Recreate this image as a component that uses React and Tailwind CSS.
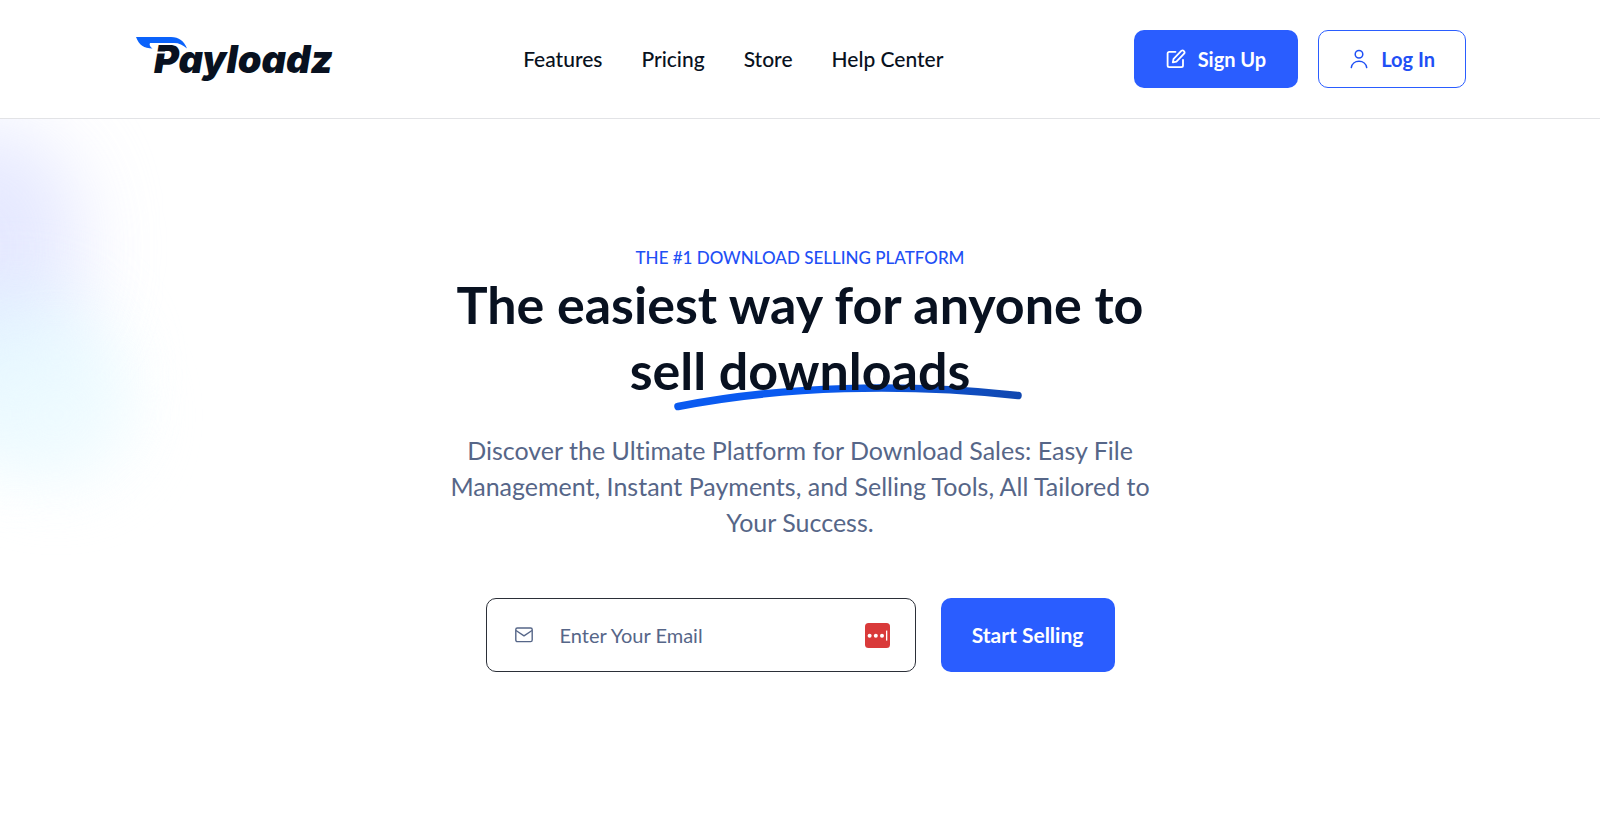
import React, { useState } from 'react';

const navLinks = [
  { name: 'Features', href: '#features' },
  { name: 'Pricing', href: '#pricing' },
  { name: 'Store', href: '#store' },
  { name: 'Help Center', href: '#help' },
];

const Logo = () => (
  <a href="#home" className="relative block pl-5 text-[#081120]">
    <span className="block font-[Inter] text-[38px] leading-[52px] font-black italic">Payloadz</span>
    <svg className="absolute left-0.5 top-1 h-8 w-14" viewBox="0 0 56 32" fill="none">
      <path d="M18 15.5H30" stroke="#fff" strokeWidth="2" />
      <path fill="#0a62fb" d="M0 0H35C43 0 48 4 51 11.5C47 8 43 6 38 6H14C13 7.5 14 10 16.5 11.5C8 11.5 3 8 0 0Z" />
    </svg>
  </a>
);

const Navbar = () => (
  <header className="relative z-10 border-b border-[#e2e3e6] bg-white px-6">
    <div className="mx-auto flex h-[118px] max-w-[1332px] items-center justify-between">
      <Logo />
      <nav className="flex items-center gap-[39px] text-[21px] font-medium text-[#081120]">
        {navLinks.map((item) => (
          <a key={item.name} href={item.href} className="hover:text-[#2a5dff]">
            {item.name}
          </a>
        ))}
      </nav>
      <div className="flex items-center gap-5 text-xl">
        <button type="button" className="flex h-[58px] items-center gap-3 rounded-[10px] bg-[#2a5dff] px-8 font-bold text-white">
          <svg className="h-5 w-5" viewBox="0 0 20 20" fill="none" stroke="currentColor" strokeWidth="1.8" strokeLinecap="round" strokeLinejoin="round">
            <path d="M9.5 2.8H3.2A1.6 1.6 0 0 0 1.6 4.4V16.6A1.6 1.6 0 0 0 3.2 18.2H15.4A1.6 1.6 0 0 0 17 16.6V10.8" />
            <path d="M15.3 1.9a2 2 0 0 1 2.8 2.8L10.4 12.6L6.8 13.4L7.6 9.8Z" />
          </svg>
          Sign Up
        </button>
        <button type="button" className="flex h-[58px] items-center gap-3 rounded-[10px] border border-[#2a5dff] px-[30px] font-bold text-[#1f50f5]">
          <svg className="h-5 w-5" viewBox="0 0 20 20" fill="none" stroke="currentColor" strokeWidth="1.5" strokeLinecap="round">
            <circle cx="10" cy="5.2" r="3.8" />
            <path d="M2.3 18.6C2.8 14.8 6 12.3 10 12.3S17.2 14.8 17.7 18.6" />
          </svg>
          Log In
        </button>
      </div>
    </div>
  </header>
);

const Hero = () => {
  const [email, setEmail] = useState('');

  return (
    <main className="relative isolate overflow-hidden px-6 pt-[126px] pb-[148px] text-center">
      <div className="absolute -left-28 top-2 -z-20 h-60 w-48 rounded-full bg-[#dfe3ff] opacity-80 blur-[40px]" />
      <div className="absolute -left-20 top-44 -z-20 h-40 w-48 rounded-full bg-[#dff6ff] opacity-70 blur-[36px]" />
      <div className="absolute -left-6 top-56 -z-20 h-36 w-40 rounded-full bg-[#eefbff] opacity-60 blur-[32px]" />

      <p className="text-[17px] leading-[26px] font-medium text-[#1f50f5]">THE #1 DOWNLOAD SELLING PLATFORM</p>
      <h1 className="text-[52px] leading-[66px] font-bold text-[#081120]">
        The easiest way for anyone to
        <br />
        sell{' '}
        <span className="relative inline-block">
          downloads
          <svg className="absolute -left-[46px] top-[47px] -z-10 h-7 w-[350px]" viewBox="0 0 350 28" fill="none">
            <defs>
              <linearGradient id="stroke" x1="0" y1="0" x2="1" y2="0">
                <stop offset="0.4" stopColor="#0a5af0" />
                <stop offset="1" stopColor="#1148b0" />
              </linearGradient>
            </defs>
            <path d="M5 22.5C110 2 230 -1 345 11.5" stroke="url(#stroke)" strokeWidth="7.5" strokeLinecap="round" />
          </svg>
        </span>
      </h1>
      <p className="mx-auto mt-[29px] max-w-[730px] text-[25px] leading-9 text-[#566688] [font-variant-ligatures:none]">
        Discover the Ultimate Platform for Download Sales: Easy File Management, Instant Payments, and Selling Tools, All Tailored to Your Success.
      </p>

      <form className="mt-[58px] flex justify-center gap-[25px]" onSubmit={(e) => e.preventDefault()}>
        <label className="flex h-[74px] w-[430px] items-center rounded-[10px] border border-[#2b2f38] bg-white px-[25px]">
          <svg className="mx-[3px] h-[18px] w-[18px] shrink-0" viewBox="0 0 18 18" fill="none" stroke="#566688" strokeWidth="1.4" strokeLinejoin="round">
            <rect x="0.8" y="2" width="16.4" height="13.6" rx="1.6" />
            <path d="M1 4.5L9 9.8L17 4.5" />
          </svg>
          <input
            type="email"
            aria-label="Enter Your Email"
            placeholder="Enter Your Email"
            className="ml-6 min-w-0 flex-1 text-xl text-[#081120] outline-none placeholder:text-[#566688]"
            value={email}
            onChange={(e) => setEmail(e.target.value)}
          />
          <svg className="h-[25px] w-[25px] shrink-0" viewBox="0 0 25 25">
            <rect width="25" height="25" rx="3.5" fill="#d93a3a" />
            <g fill="#fff">
              <circle cx="4.6" cy="12.7" r="2" />
              <circle cx="10.8" cy="12.7" r="2" />
              <circle cx="17" cy="12.7" r="2" />
              <rect x="21" y="7.6" width="1.3" height="10" />
            </g>
          </svg>
        </label>
        <button type="submit" className="h-[74px] w-[174px] rounded-[10px] bg-[#2a5dff] text-[21px] font-bold text-white">
          Start Selling
        </button>
      </form>
    </main>
  );
};

const App = () => (
  <div className="min-h-screen bg-white font-[Lato,sans-serif]">
    <Navbar />
    <Hero />
  </div>
);

export default App;
